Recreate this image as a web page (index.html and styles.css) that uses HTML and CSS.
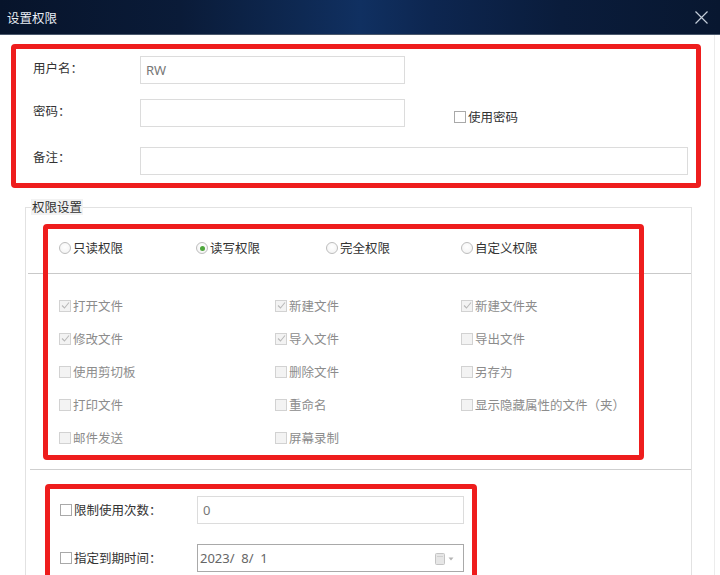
FILE: index.html
```html
<!DOCTYPE html>
<html lang="zh-CN">
<head>
<meta charset="utf-8">
<title>设置权限</title>
<link rel="stylesheet" href="styles.css">
</head>
<body>
<div class="window">
  <div class="titlebar">
    <span class="title">设置权限</span>
    <svg class="close" width="13" height="13" viewBox="0 0 13 13"><path d="M0.5 0.5 L12.5 12.5 M12.5 0.5 L0.5 12.5" stroke="#c3ccd8" stroke-width="1.2" fill="none"/></svg>
  </div>
  <div class="main">
    <div class="form">
      <div class="row r1">
        <span class="lbl">用户名：</span>
        <div class="input w265">RW</div>
      </div>
      <div class="row r2">
        <span class="lbl">密码：</span>
        <div class="input w265"></div>
        <span class="item usepw"><span class="cb"></span>使用密码</span>
      </div>
      <div class="row r3">
        <span class="lbl">备注：</span>
        <div class="input w548"></div>
      </div>
    </div>

    <fieldset class="perm">
      <legend>权限设置</legend>
      <div class="radios">
        <span class="item"><span class="radio"></span>只读权限</span>
        <span class="item"><span class="radio on"></span>读写权限</span>
        <span class="item"><span class="radio"></span>完全权限</span>
        <span class="item"><span class="radio"></span>自定义权限</span>
      </div>
      <div class="sep"></div>
      <div class="grid">
        <span class="item dis"><span class="cb dcb on"><svg width="9" height="9" viewBox="0 0 9 9"><path d="M1 4.5 L3.5 7 L8 1.5" stroke="#b9b9b9" stroke-width="1.1" fill="none"/></svg></span>打开文件</span>
        <span class="item dis"><span class="cb dcb on"><svg width="9" height="9" viewBox="0 0 9 9"><path d="M1 4.5 L3.5 7 L8 1.5" stroke="#b9b9b9" stroke-width="1.1" fill="none"/></svg></span>新建文件</span>
        <span class="item dis"><span class="cb dcb on"><svg width="9" height="9" viewBox="0 0 9 9"><path d="M1 4.5 L3.5 7 L8 1.5" stroke="#b9b9b9" stroke-width="1.1" fill="none"/></svg></span>新建文件夹</span>

        <span class="item dis"><span class="cb dcb on"><svg width="9" height="9" viewBox="0 0 9 9"><path d="M1 4.5 L3.5 7 L8 1.5" stroke="#b9b9b9" stroke-width="1.1" fill="none"/></svg></span>修改文件</span>
        <span class="item dis"><span class="cb dcb on"><svg width="9" height="9" viewBox="0 0 9 9"><path d="M1 4.5 L3.5 7 L8 1.5" stroke="#b9b9b9" stroke-width="1.1" fill="none"/></svg></span>导入文件</span>
        <span class="item dis"><span class="cb dcb"></span>导出文件</span>

        <span class="item dis"><span class="cb dcb"></span>使用剪切板</span>
        <span class="item dis"><span class="cb dcb"></span>删除文件</span>
        <span class="item dis"><span class="cb dcb"></span>另存为</span>

        <span class="item dis"><span class="cb dcb"></span>打印文件</span>
        <span class="item dis"><span class="cb dcb"></span>重命名</span>
        <span class="item dis"><span class="cb dcb"></span>显示隐藏属性的文件（夹）</span>

        <span class="item dis"><span class="cb dcb"></span>邮件发送</span>
        <span class="item dis"><span class="cb dcb"></span>屏幕录制</span>
      </div>
      <div class="sep sep2"></div>
      <div class="limits">
        <div class="lrow">
          <span class="item llbl"><span class="cb"></span>限制使用次数：</span>
          <div class="input w267">0</div>
        </div>
        <div class="lrow lrow2">
          <span class="item llbl"><span class="cb"></span>指定到期时间：</span>
          <div class="input w267 date"><span class="dtext">2023/  8/  1</span>
            <svg class="dicon" width="20" height="13" viewBox="0 0 20 13"><rect x="0.5" y="1.5" width="9" height="11" rx="1" fill="#e6e6e6" stroke="#c4c4c4"/><line x1="2" y1="4.5" x2="8" y2="4.5" stroke="#d0d0d0"/><path d="M13.5 5.5 L18.5 5.5 L16 8.5 Z" fill="#b4b4b4"/></svg>
          </div>
        </div>
      </div>
    </fieldset>
  </div>

  <div class="mark mark1"></div>
  <div class="mark mark2"></div>
  <div class="mark mark3"></div>
</div>
</body>
</html>
```

FILE: styles.css
```css
html, body {
  margin: 0;
  padding: 0;
  background: #fff;
}

body {
  font-family: "Noto Sans CJK SC", "Noto Sans", sans-serif;
  font-size: 12.5px;
  color: #333;
}

.window {
  position: relative;
  width: 720px;
  height: 575px;
  overflow: hidden;
  background: #fff;
}

.titlebar {
  height: 34px;
  border-bottom: 1px solid #4a586c;
  display: flex;
  align-items: center;
  justify-content: space-between;
  padding: 0 12px 0 7px;
  background: linear-gradient(90deg, #07142b 0%, #0a1b38 25%, #0e2953 42%, #103061 50%, #0d2650 60%, #0a1c3b 78%, #081730 100%);
}

.title {
  color: #e9eef5;
  font-size: 12.5px;
  line-height: 16px;
  margin-top: 1px;
}

.close {
  display: block;
  margin-top: 1px;
}

.main {
  width: 715px;
  height: 540px;
  border-right: 1px solid #ececec;
  box-sizing: border-box;
  padding: 21px 22px 0 25px;
}

/* top form */
.form {
  padding-left: 8px;
}

.row {
  display: flex;
  align-items: flex-start;
  height: 28px;
}

.r2 { margin-top: 15px; }
.r3 { margin-top: 20px; }

.lbl {
  width: 107px;
  line-height: 16px;
  padding-top: 4px;
  color: #333;
}

.r3 .lbl { padding-top: 2px; }

.input {
  box-sizing: border-box;
  height: 28px;
  border: 1px solid #dcdcdc;
  background: #fff;
  color: #777;
  font-family: "Noto Sans", "Noto Sans CJK SC", sans-serif;
  font-size: 13px;
  line-height: 26px;
  padding-left: 5px;
}

.w265 { width: 265px; }
.w548 { width: 548px; }
.w267 { width: 267px; }

.item {
  display: flex;
  align-items: center;
  gap: 2px;
  line-height: 16px;
  white-space: nowrap;
}

.usepw {
  margin-left: 49px;
  margin-top: 10px;
}

.cb {
  box-sizing: border-box;
  width: 12px;
  height: 12px;
  border: 1px solid #a9a9a9;
  background: #fff;
  display: flex;
  align-items: center;
  justify-content: center;
  flex: none;
}

.cb svg { display: block; }

.dcb {
  border-color: #d2d2d2;
  background: #f3f3f3;
}

.dis { color: #8c8c8c; }

/* fieldset */
.perm {
  margin: 24px 0 0 0;
  padding: 0;
  height: 440px;
  border: 1px solid #e2e2e2;
  min-width: 0;
}

.perm legend {
  margin-left: 5px;
  padding: 0 1px;
  line-height: 16px;
  background: #f2f2f2;
  color: #333;
}

.radios {
  box-sizing: border-box;
  height: 58px;
  padding: 8px 0 0 33px;
  display: grid;
  grid-template-columns: 137px 130px 135px auto;
  align-items: center;
}

.radio {
  box-sizing: border-box;
  width: 12px;
  height: 12px;
  border-radius: 50%;
  border: 1px solid #bdbdbd;
  background: radial-gradient(circle at 50% 40%, #fff 0%, #f1f1f1 100%);
  display: flex;
  align-items: center;
  justify-content: center;
  flex: none;
}

.radio.on::after {
  content: "";
  width: 5px;
  height: 5px;
  border-radius: 50%;
  background: #4ea63c;
}

.sep {
  height: 0;
  border-top: 1px solid #c9c9c9;
  margin-left: 2px;
}

.sep2 {
  margin-left: 4px;
  border-top-color: #cfcfcf;
}

.grid {
  padding: 15px 0 15px 33px;
  display: grid;
  grid-template-columns: 216px 186px auto;
  grid-auto-rows: 33px;
  align-items: center;
}

.limits {
  padding: 26px 0 0 34px;
}

.lrow {
  display: flex;
  align-items: center;
}

.lrow2 { margin-top: 20px; }

.llbl {
  width: 137px;
  color: #333;
}

.date {
  border-color: #a9a9a9;
  display: flex;
  align-items: center;
  justify-content: space-between;
  padding: 0 8px 0 2px;
  color: #666;
}

.dtext { white-space: pre; }

.dicon { display: block; margin-top: 1px; }

/* red annotation frames drawn over the dialog */
.mark {
  position: absolute;
  box-sizing: border-box;
  border: 5px solid #ee1d1d;
  border-radius: 4px;
  pointer-events: none;
}

.mark1 { left: 11px; top: 44px; width: 690px; height: 144px; }
.mark2 { left: 43px; top: 224px; width: 601px; height: 236px; }
.mark3 { left: 45px; top: 484px; width: 432px; height: 130px; }
```
